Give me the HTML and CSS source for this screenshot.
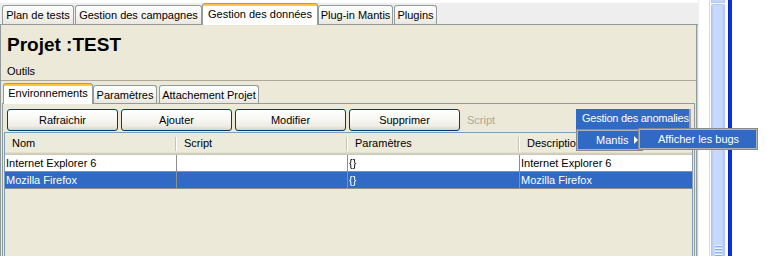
FILE: index.html
```html
<!DOCTYPE html>
<html lang="fr">
<head>
<meta charset="utf-8">
<title>Projet :TEST</title>
<link rel="stylesheet" href="styles.css">
</head>
<body>
<div class="window">
  <div class="main">
    <nav class="tabstrip">
      <div class="tab t-plan">Plan de tests</div>
      <div class="tab t-camp">Gestion des campagnes</div>
      <div class="tab active t-data">Gestion des données</div>
      <div class="tab t-mantis">Plug-in Mantis</div>
      <div class="tab t-plugins">Plugins</div>
    </nav>
    <section class="panel">
      <h1 class="title">Projet :TEST</h1>
      <div class="tools">Outils</div>
      <div class="sep"></div>
      <div class="subtabs">
        <div class="subtab active s-env">Environnements</div>
        <div class="subtab s-param">Paramètres</div>
        <div class="subtab s-attach">Attachement Projet</div>
      </div>
      <div class="subpanel">
        <div class="toolbar">
          <button class="btn">Rafraichir</button>
          <button class="btn">Ajouter</button>
          <button class="btn">Modifier</button>
          <button class="btn">Supprimer</button>
          <span class="disabled">Script</span>
        </div>
        <div class="scrollpane">
          <div class="head">
            <div class="hcell">Nom</div>
            <div class="hcell">Script</div>
            <div class="hcell">Paramètres</div>
            <div class="hcell">Description</div>
          </div>
          <div class="row">
            <div class="cell">Internet Explorer 6</div>
            <div class="cell"></div>
            <div class="cell"><span class="brace">{}</span></div>
            <div class="cell">Internet Explorer 6</div>
          </div>
          <div class="row selected">
            <div class="cell">Mozilla Firefox</div>
            <div class="cell"></div>
            <div class="cell"><span class="brace">{}</span></div>
            <div class="cell">Mozilla Firefox</div>
          </div>
        </div>
      </div>
    </section>
    <div class="menu-title">Gestion des anomalies</div>
    <div class="popup"><div class="item">Mantis<span class="arrow"></span></div></div>
    <div class="popup sub"><div class="item">Afficher les bugs</div></div>
  </div>
  <div class="gutter"></div>
  <div class="scrollbar">
    <div class="seg-top"></div>
    <div class="thumb"><div class="grip"></div></div>
  </div>
  <div class="gap"></div>
  <div class="edge"></div>
</div>
</body>
</html>
```

FILE: styles.css
```css
* { box-sizing: border-box; }
html, body { margin: 0; padding: 0; }
body {
  width: 767px;
  height: 256px;
  overflow: hidden;
  background: #fff;
  font: 11px/13px "Liberation Sans", Arial, sans-serif;
  color: #000;
}
.window { display: flex; height: 256px; }
.main {
  position: relative;
  z-index: 2;
  width: 699px;
  flex: none;
  display: flex;
  flex-direction: column;
  background: #f0f0f0;
}

/* top tabs */
.tabstrip {
  flex: none;
  height: 25px;
  margin-right: 1px;
  border-top: 3px solid #fff;
  border-bottom: 1px solid #919b9c;
  background: #eeeeee;
  display: flex;
  align-items: flex-end;
  padding-left: 2px;
}
.tab {
  flex: none;
  height: 19px;
  border: 1px solid #919b9c;
  border-bottom: 0;
  border-radius: 3px 3px 0 0;
  background: linear-gradient(#ffffff, #f5f4f0 55%, #e9e7dd);
  display: flex;
  align-items: center;
  justify-content: center;
  padding-top: 1px;
  white-space: nowrap;
}
.tab.active {
  position: relative;
  height: 22px;
  margin-bottom: -1px;
  padding: 0 0 1px;
  border-top-color: #e68b2c;
  background: linear-gradient(#ffc83c 0, #ffc83c 2px, #fff 2px);
}
.t-plan { width: 72px; margin-right: 1px; }
.t-camp { width: 127px; }
.t-data { width: 116px; }
.t-mantis { width: 75px; margin-right: 1px; }
.t-plugins { width: 43px; }

/* main panel */
.panel {
  flex: 1;
  min-height: 0;
  margin-right: 2px;
  background: #ece9d8;
  border-left: 1px solid #919b9c;
  border-right: 1px solid #919b9c;
  box-shadow: 1px 0 0 #d6d2c2;
  display: flex;
  flex-direction: column;
}
.title {
  margin: 9px 0 0 6px;
  font-size: 19px;
  line-height: 22px;
  font-weight: bold;
}
.tools { margin: 9px 0 0 6px; line-height: 13px; }
.sep { flex: none; margin-top: 2px; height: 1px; background: #aca899; }

/* inner tabs */
.subtabs {
  flex: none;
  display: flex;
  align-items: flex-end;
  height: 20px;
  margin-top: 2px;
  padding-left: 2px;
}
.subtab {
  flex: none;
  height: 18px;
  border: 1px solid #919b9c;
  border-bottom: 0;
  border-radius: 3px 3px 0 0;
  background: linear-gradient(#ffffff, #f5f4f0 55%, #e9e7dd);
  display: flex;
  align-items: center;
  justify-content: center;
  padding-top: 1px;
  white-space: nowrap;
}
.subtab.active {
  position: relative;
  height: 21px;
  margin-bottom: -1px;
  padding: 0 0 2px;
  border-top-color: #e68b2c;
  background: linear-gradient(#ffc83c 0, #ffc83c 2px, #fff 2px);
}
.s-env { width: 90px; }
.s-param { width: 64px; margin-right: 2px; }
.s-attach { width: 100px; }

.subpanel {
  flex: 1;
  min-height: 0;
  margin: 0 1px;
  border: 1px solid #919b9c;
  border-bottom: 0;
  display: flex;
  flex-direction: column;
}
.toolbar {
  flex: none;
  display: flex;
  align-items: center;
  gap: 3px;
  height: 22px;
  margin: 5px 0 0 4px;
}
.btn {
  width: 111px;
  height: 22px;
  padding: 0;
  border: 1px solid #003c74;
  border-radius: 3px;
  background: linear-gradient(#ffffff, #f7f7f4 45%, #eeece4 80%, #d8d3c8);
  font: inherit;
  color: #000;
}
.disabled { margin-left: 4px; color: #aca899; }

/* table */
.scrollpane {
  flex: 1;
  min-height: 0;
  margin: 1px 1px 0;
  border: 1px solid #7f9db9;
  border-bottom: 0;
  background: #ece9d8;
}
.head, .row {
  display: grid;
  grid-template-columns: 172px 171px 172px 172px;
}
.head {
  height: 22px;
  background: linear-gradient(#ebeadb 0 19px, #e2dec8 19px 20px, #d6d2c2 20px 21px, #cbc7b8 21px);
}
.hcell {
  position: relative;
  padding-left: 7px;
  line-height: 21px;
  white-space: nowrap;
}
.hcell:not(:last-child)::after {
  content: "";
  position: absolute;
  right: 1px;
  top: 4px;
  bottom: 4px;
  width: 1px;
  background: #c7c4b4;
  box-shadow: 1px 0 0 #ffffff;
}
.row {
  height: 17px;
  background: #fff;
  border-bottom: 1px solid #8e8e8e;
}
.cell {
  padding-left: 1px;
  line-height: 16px;
  border-right: 1px solid #8e8e8e;
  white-space: nowrap;
  overflow: hidden;
}
.cell:last-child { border-right: 0; }
.row.selected { background: #316ac5; color: #fff; }
.brace { display: inline-block; filter: grayscale(1); }

/* popup menu */
.menu-title {
  position: absolute;
  z-index: 5;
  left: 576px;
  top: 109px;
  width: 115px;
  height: 20px;
  padding-left: 6px;
  line-height: 19px;
  letter-spacing: -0.25px;
  background: #316ac5;
  color: #fff;
  border-right: 2px solid #a3a3a3;
  white-space: nowrap;
  overflow: hidden;
}
.popup {
  position: absolute;
  z-index: 6;
  left: 576px;
  top: 129px;
  width: 67px;
  height: 22px;
  border: 1px solid #8a8a8a;
  box-shadow: inset 0 0 0 1px #b3b3b3;
  background: #316ac5;
  color: #fff;
}
.popup .item {
  display: flex;
  align-items: center;
  height: 100%;
  padding-left: 19px;
  white-space: nowrap;
}
.arrow {
  margin-left: 6px;
  width: 0;
  height: 0;
  border-top: 4px solid transparent;
  border-bottom: 4px solid transparent;
  border-left: 4px solid #fff;
}
.popup.sub {
  z-index: 7;
  left: 638px;
  top: 128px;
  width: 120px;
  height: 22px;
}

/* scrollbar strip */
.gutter { flex: none; width: 10px; }
.scrollbar {
  flex: none;
  width: 17px;
  border-left: 1px solid #dcdcdc;
  background: #fbfbfb;
  padding: 0 1px 0 1px;
  display: flex;
  flex-direction: column;
}
.seg-top {
  flex: none;
  height: 3px;
  background: #c3d4fc;
  border: 1px solid #b2c7f5;
  border-top: 0;
}
.thumb {
  flex: 1;
  margin-top: 1px;
  background: linear-gradient(to right, #b8cbf7, #cad9fd 20%, #c6d6fd 80%, #b4c8f4);
  border: 1px solid #b2c7f5;
  border-bottom: 0;
  border-radius: 2px 2px 0 0;
  position: relative;
}
.grip {
  position: absolute;
  left: 3px;
  top: 240px;
  width: 7px;
  height: 11px;
  background: repeating-linear-gradient(#eef4ff 0 1px, #8cacf0 1px 2px, transparent 2px 3px);
}
.gap { flex: none; width: 2px; }
.edge {
  flex: none;
  width: 4px;
  background: linear-gradient(to right, #0025c0, #0a34de 50%, #0831d0);
}
```
